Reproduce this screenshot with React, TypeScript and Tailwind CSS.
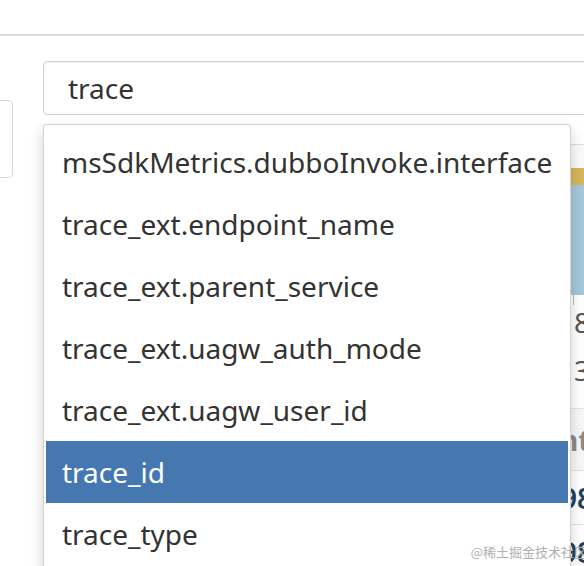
import React from "react";

const options = [
  "msSdkMetrics.dubboInvoke.interface",
  "trace_ext.endpoint_name",
  "trace_ext.parent_service",
  "trace_ext.uagw_auth_mode",
  "trace_ext.uagw_user_id",
  "trace_id",
  "trace_type",
];

const active = "trace_id";

export default function App() {
  return (
    <div className="relative w-[584px] h-[566px] overflow-hidden bg-white font-['Noto_Sans','Open_Sans','Noto_Sans_CJK_SC',sans-serif] text-[#333]">
      {/* page header strip */}
      <div className="h-[36px] border-b-2 border-[#dedede]" />

      <div className="flex">
        {/* left control, mostly off screen */}
        <div className="w-[13px] shrink-0 pt-[64px]">
          <div className="h-[78px] border border-l-0 border-[#d4d4d4] rounded-r-[5px]" />
        </div>

        <div className="relative ml-[30px] flex-1 pt-[25px]">
          {/* search input */}
          <div className="w-[600px] h-[54px] flex items-center pl-[24px] border border-[#cfcfcf] rounded-[4px] shadow-[inset_0_1px_1px_rgba(0,0,0,0.06)] text-[28px] leading-none">
            trace
          </div>

          {/* table behind the menu */}
          <div className="mt-[29px] w-[600px]">
            <div className="h-[24px] border-t border-[#dddddd] bg-[#fafafa]" />
            <div className="h-[17px] bg-[#d6b65c]" />
            <div className="h-[110px] bg-[#a5c7da]" />
            <div className="flex">
              <div className="w-[528px] shrink-0" />
              <div className="flex-1 flex flex-col pl-[3px] text-[28px] text-[#555] leading-none">
                <div className="h-[10px] w-px ml-[-1px] bg-[#bbbbbb]" />
                <div className="h-[34px] flex items-center">8</div>
                <div className="h-[69px] flex items-center pb-[7px]">3</div>
              </div>
            </div>
            <div className="flex h-[62px] border-t border-[#e2e2e2] bg-[#f7f7f7]">
              <div className="w-[528px] shrink-0" />
              <div className="flex-1 flex items-center text-[28px] font-bold text-[#8a8a8a] leading-none">
                <span className="ml-[-11px]">nt</span>
              </div>
            </div>
            <div className="flex h-[54px] border-t border-[#e2e2e2]">
              <div className="w-[528px] shrink-0" />
              <div className="flex-1 flex items-center text-[28px] font-semibold text-[#24405e] leading-none">
                <span className="ml-[-10px]">98</span>
              </div>
            </div>
            <div className="flex h-[54px] border-t border-[#e2e2e2]">
              <div className="w-[528px] shrink-0" />
              <div className="flex-1 flex items-center text-[28px] font-semibold text-[#24405e] leading-none">
                <span className="ml-[-10px]">98</span>
              </div>
            </div>
          </div>

          {/* autocomplete menu */}
          <ul className="absolute left-0 top-[88px] w-[528px] bg-white border border-[#d2d2d2] rounded-[3px] px-[2px] pt-[6px] pb-[4px] shadow-[0_6px_14px_rgba(0,0,0,0.18)]">
            {options.map((opt) => (
              <li
                key={opt}
                className={
                  opt === active
                    ? "h-[62px] flex items-center pl-[16px] text-[28px] leading-none bg-[#4578b0] text-white"
                    : "h-[62px] flex items-center pl-[16px] text-[28px] leading-none text-[#333]"
                }
              >
                {opt}
              </li>
            ))}
          </ul>
        </div>
      </div>

      {/* watermark */}
      <div className="absolute right-[-3px] bottom-[5px] text-[13px] text-[#b0b0b0] font-['Noto_Sans_CJK_SC',sans-serif]">
        @稀土掘金技术社区
      </div>
    </div>
  );
}
